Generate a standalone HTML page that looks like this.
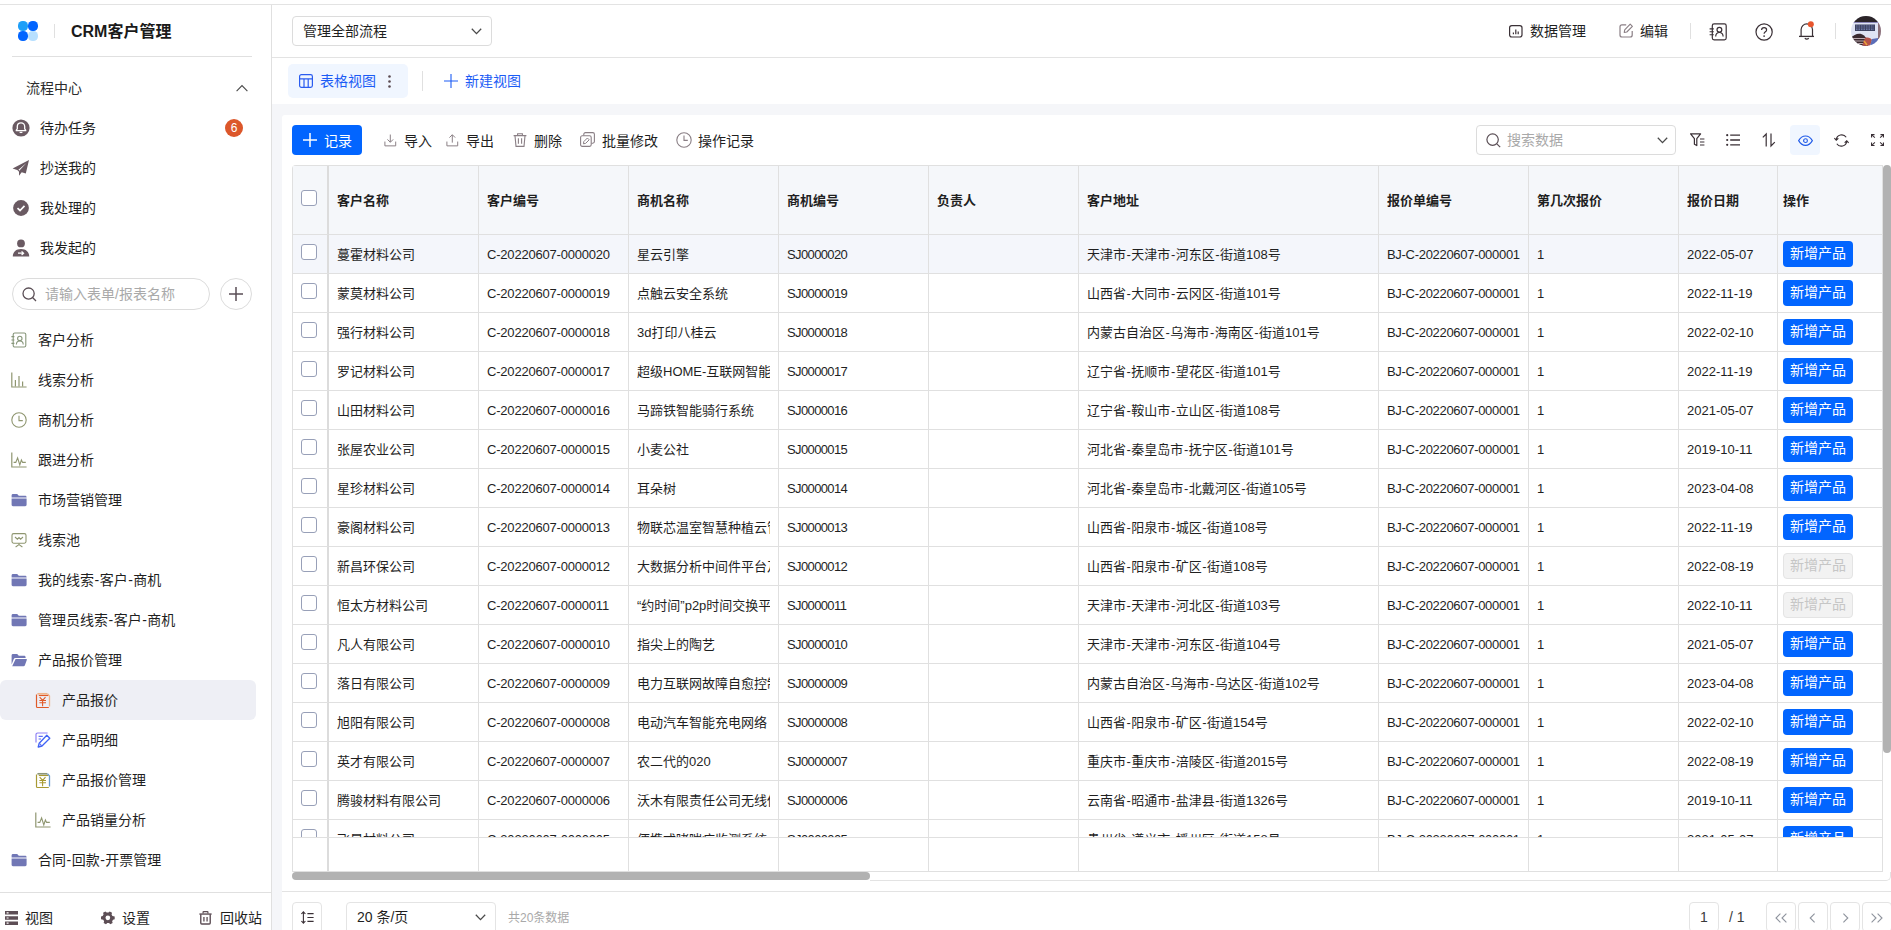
<!DOCTYPE html>
<html lang="zh-CN">
<head>
<meta charset="utf-8">
<title>CRM客户管理</title>
<style>
*{box-sizing:border-box;margin:0;padding:0}
html,body{width:1891px;height:930px;overflow:hidden;background:#fff}
body{position:relative;font-family:"Liberation Sans","Noto Sans CJK SC",sans-serif;font-size:14px;color:#1f1f1f;-webkit-font-smoothing:antialiased}
.abs{position:absolute}
svg{display:block;overflow:visible}
.topline{left:0;top:4px;width:1891px;height:1px;background:#e3e3e3}
/* sidebar */
#side{left:0;top:5px;width:272px;height:925px;border-right:1px solid #e0e0e0;background:#fff}
.t{position:absolute;white-space:nowrap;line-height:20px;height:20px}
.mi{position:absolute;left:0;width:271px;height:40px}
.mi .ic{position:absolute;left:11px;top:12px;width:16px;height:16px}
.hy{margin:0 0.5px}
.mi .tx{position:absolute;left:38px;top:10px;line-height:20px;white-space:nowrap;color:#1f1f1f}
.mi.sub .ic{left:35px}
.mi.sub .tx{left:62px}
.mi.fl .tx{left:40px}
.mi.fl .ic{left:12px;top:11px;width:18px;height:18px}
/* main */
#hdr{left:272px;top:5px;width:1619px;height:53px;border-bottom:1px solid #e3e3e3;background:#fff}
.sel{border:1px solid #dcdcdc;border-radius:4px;background:#fff}
#grey{left:272px;top:104px;width:1619px;height:826px;background:#f5f6f9}
#card{left:282px;top:115px;width:1609px;height:815px;background:#fff;border-radius:3px 0 0 0}
.tb{position:absolute;top:131px;line-height:20px;white-space:nowrap;color:#1f1f1f}
/* table */
#tw{left:292px;top:165px;width:1591px;height:673px;overflow:hidden;border-radius:4px 0 0 0}
table{border-collapse:separate;border-spacing:0;table-layout:fixed;width:1591px;border-left:1px solid #e0e0e0;border-top:1px solid #e0e0e0;font-size:13px}
th,td{border-right:1px solid #e0e0e0;border-bottom:1px solid #e0e0e0;height:39px;padding:0 8px;text-align:left;vertical-align:middle;overflow:hidden;white-space:nowrap;font-weight:normal}
th{height:69px;background:#f5f7fa;font-weight:bold;color:#1f1f1f}
td div,th div{overflow:hidden;white-space:nowrap;line-height:20px;height:20px;position:relative;top:1px}
.l1{letter-spacing:-0.2px}.l2{letter-spacing:-0.62px}.l3{letter-spacing:-0.3px}
tr.hv td{background:#f4f6fb}
.ck{border-right:2px solid #dcdcdc;padding:0;position:relative}
.cb{position:absolute;left:8px;top:9px;width:16px;height:16px;border:1px solid #98a0b8;border-radius:3px;background:#fff}
th .cb{top:24px}
.op{padding:0 0 0 5px}
.ab{display:block;width:70px;height:26px;line-height:25px;border-radius:4px;background:#0265ff;color:#fff;font-size:14px;text-align:center;position:relative;top:0}
.ab.dis{background:#f2f2f2;color:#c6c6c6;border:1px solid #e4e4e4;line-height:23px}
.pg{position:absolute;top:902px;width:30px;height:30px;border:1px solid #e4e4e4;border-radius:4px;background:#fff}
</style>
</head>
<body>
<div class="abs topline"></div>

<!-- ============ SIDEBAR ============ -->
<div class="abs" id="side"></div>
<!-- logo -->
<svg class="abs" style="left:18px;top:21px" width="20" height="20" viewBox="0 0 20 20">
<rect x="0" y="0" width="10" height="10" rx="4.6" fill="#1e9ff8"/>
<rect x="10" y="0" width="10" height="10" rx="4.6" fill="#0265ff"/>
<rect x="0" y="10" width="10" height="10" rx="4.6" fill="#0265ff"/>
<rect x="10" y="10" width="10" height="10" rx="4.6" fill="#b8e0ff"/>
</svg>
<div class="abs" style="left:54px;top:24px;width:1px;height:14px;background:#e0e0e0"></div>
<div class="t" style="left:71px;top:21px;font-size:16px;font-weight:bold;line-height:22px;height:22px;color:#1a1a1a">CRM客户管理</div>
<div class="abs" style="left:12px;top:56px;width:240px;height:1px;background:#e0e0e0"></div>

<div class="t" style="left:26px;top:78px;color:#2b2b2b">流程中心</div>
<svg class="abs" style="left:235.500px;top:84px" width="12" height="8" viewBox="0 0 12 8"><path d="M0.600 7.200 L6 1.600 L11.400 7.200" fill="none" stroke="#4a4a4a" stroke-width="1.100"/></svg>

<!-- flow items -->
<div class="mi fl" style="top:108px">
<svg class="ic" viewBox="0 0 18 18"><circle cx="9" cy="9" r="8.6" fill="#6a5a62"/><path d="M9 3.8c-2.3 0-3.7 1.7-3.7 3.8v2.2l-1 1.3v.6h9.4v-.6l-1-1.3V7.6c0-2.1-1.4-3.8-3.7-3.8z" fill="none" stroke="#fff" stroke-width="1.3"/><path d="M7.6 13.4h2.8" stroke="#fff" stroke-width="1.3"/></svg>
<span class="tx">待办任务</span>
<span class="abs" style="left:225px;top:11px;width:18px;height:18px;border-radius:9px;background:#dc572a;color:#fff;font-size:12px;line-height:19px;text-align:center">6</span>
</div>
<div class="mi fl" style="top:148px">
<svg class="ic" viewBox="0 0 18 18"><path d="M17 1 L0.600 9.600 L5.900 11.300 L14.400 4 L7 12 L7 16.800 L9.700 13.200 L13.800 14.600 Z" fill="#6a5a62"/><path d="M6 11.300L7 12" stroke="#6a5a62" stroke-width="1.200"/></svg>
<span class="tx">抄送我的</span>
</div>
<div class="mi fl" style="top:188px">
<svg class="ic" viewBox="0 0 18 18"><circle cx="9" cy="9" r="7.900" fill="#6a5a62"/><path d="M5.500 9.200 L8 11.500 L12.500 6.800" fill="none" stroke="#fff" stroke-width="1.7"/></svg>
<span class="tx">我处理的</span>
</div>
<div class="mi fl" style="top:228px">
<svg class="ic" viewBox="0 0 18 18"><circle cx="9" cy="4.4" r="3.9" fill="#6a5a62"/><path d="M0.8 17.4c0-4.4 3.2-7.4 8.2-7.4s8.2 3 8.2 7.4z" fill="#6a5a62"/><path d="M6 14.2h5.2M9.6 12.4l2 1.8-2 1.8" fill="none" stroke="#fff" stroke-width="1.2"/></svg>
<span class="tx">我发起的</span>
</div>

<!-- search -->
<div class="abs" style="left:12px;top:278px;width:198px;height:32px;border:1px solid #dcdcdc;border-radius:16px"></div>
<svg class="abs" style="left:22px;top:287px" width="15" height="15" viewBox="0 0 15 15"><circle cx="6.6" cy="6.6" r="5.6" fill="none" stroke="#5a4e55" stroke-width="1.3"/><path d="M10.8 10.8 L14 14" stroke="#5a4e55" stroke-width="1.3"/></svg>
<div class="t" style="left:45px;top:284px;color:#a9a9a9">请输入表单/报表名称</div>
<div class="abs" style="left:220px;top:278px;width:32px;height:32px;border:1px solid #dcdcdc;border-radius:16px"></div>
<svg class="abs" style="left:229px;top:287px" width="14" height="14" viewBox="0 0 14 14"><path d="M7 0v14M0 7h14" stroke="#5a4e55" stroke-width="1.5"/></svg>

<!-- menu -->
<div class="mi" style="top:320px">
<svg class="ic" viewBox="0 0 16 16"><rect x="2.2" y="1" width="12.6" height="14" rx="1.6" fill="none" stroke="#87967a" stroke-width="1.1"/><path d="M0.4 4.6h3M0.4 8h3M0.4 11.4h3" stroke="#87967a" stroke-width="1.1"/><circle cx="8.8" cy="6.4" r="2.2" fill="none" stroke="#87967a" stroke-width="1.1"/><path d="M5.4 12.6c0-2.2 1.4-3.6 3.4-3.6s3.4 1.4 3.4 3.6" fill="none" stroke="#87967a" stroke-width="1.1"/></svg>
<span class="tx">客户分析</span></div>
<div class="mi" style="top:360px">
<svg class="ic" viewBox="0 0 16 16"><path d="M0.8 0.6V15H15.6" fill="none" stroke="#8f9670" stroke-width="1.2"/><path d="M4.4 14.4V8M8 14.4V4M11.6 14.4V9.6" stroke="#8f9670" stroke-width="1.2"/></svg>
<span class="tx">线索分析</span></div>
<div class="mi" style="top:400px">
<svg class="ic" viewBox="0 0 16 16"><circle cx="8" cy="8" r="7.2" fill="none" stroke="#8f9670" stroke-width="1.1"/><path d="M8 3.8V8.6H11.8" fill="none" stroke="#8f9670" stroke-width="1.1"/></svg>
<span class="tx">商机分析</span></div>
<div class="mi" style="top:440px">
<svg class="ic" viewBox="0 0 16 16"><path d="M0.8 0.6V15H15.6" fill="none" stroke="#8f9670" stroke-width="1.2"/><path d="M2.6 10.4H4.800L6.600 5.800L8.800 13L10.400 8L11.600 10.400H14.800" fill="none" stroke="#8f9670" stroke-width="1.1"/></svg>
<span class="tx">跟进分析</span></div>
<div class="mi" style="top:480px">
<svg class="ic" viewBox="0 0 16 16"><path d="M0.6 3.4c0-.8.6-1.4 1.4-1.4h4.2l1.6 1.8h6.4c.8 0 1.4.6 1.4 1.4V5.6H0.6z M0.6 6.6H15.6V12.8c0 .8-.6 1.4-1.4 1.4H2c-.8 0-1.4-.6-1.4-1.4z" fill="#7177b5"/></svg>
<span class="tx">市场营销管理</span></div>
<div class="mi" style="top:520px">
<svg class="ic" viewBox="0 0 16 16"><rect x="1" y="1.6" width="14" height="9.6" rx="1.6" fill="none" stroke="#8f9670" stroke-width="1.1"/><path d="M4 5L6.4 7.2L8 5.6L9.6 7.2L12 5" fill="none" stroke="#8f9670" stroke-width="1.1"/><path d="M8 11.2V12.6M4.6 15L8 12.6L11.4 15" fill="none" stroke="#8f9670" stroke-width="1.1"/></svg>
<span class="tx">线索池</span></div>
<div class="mi" style="top:560px">
<svg class="ic" viewBox="0 0 16 16"><path d="M0.6 3.4c0-.8.6-1.4 1.4-1.4h4.2l1.6 1.8h6.4c.8 0 1.4.6 1.4 1.4V5.6H0.6z M0.6 6.6H15.6V12.8c0 .8-.6 1.4-1.4 1.4H2c-.8 0-1.4-.6-1.4-1.4z" fill="#7177b5"/></svg>
<span class="tx">我的线索<span class="hy">-</span>客户<span class="hy">-</span>商机</span></div>
<div class="mi" style="top:600px">
<svg class="ic" viewBox="0 0 16 16"><path d="M0.6 3.4c0-.8.6-1.4 1.4-1.4h4.2l1.6 1.8h6.4c.8 0 1.4.6 1.4 1.4V5.6H0.6z M0.6 6.6H15.6V12.8c0 .8-.6 1.4-1.4 1.4H2c-.8 0-1.4-.6-1.4-1.4z" fill="#7177b5"/></svg>
<span class="tx">管理员线索<span class="hy">-</span>客户<span class="hy">-</span>商机</span></div>
<div class="mi" style="top:640px">
<svg class="ic" viewBox="0 0 16 16"><path d="M0.6 3.4c0-.8.6-1.4 1.4-1.4h4.2l1.6 1.8h5.4c.8 0 1.4.6 1.4 1.4V6H4.4c-.8 0-1.4.4-1.7 1.2L0.6 12.6z" fill="#7177b5"/><path d="M4.6 7h10.6c.5 0 .8.4.6.9l-1.9 5.3c-.2.6-.7 1-1.4 1H1.2z" fill="#7177b5"/></svg>
<span class="tx">产品报价管理</span></div>
<div class="abs" style="left:0;top:680px;width:256px;height:40px;background:#eeeff5;border-radius:6px"></div>
<div class="mi sub" style="top:680px">
<svg class="ic" viewBox="0 0 16 16"><path d="M2.400 1.800h9.800" fill="none" stroke="#f0b48a" stroke-width="1.700"/><path d="M12.400 1.600l2.100 2.400v10.600" fill="none" stroke="#f0b48a" stroke-width="1.300"/><path d="M1.500 2.600v11.800c0 .600.500 1.100 1.100 1.100h11.200" fill="none" stroke="#e05a28" stroke-width="1.200"/><path d="M3.800 3.500h9.400" fill="none" stroke="#e05a28" stroke-width="1.100"/><path d="M4.700 5.200l2.900 3.200 2.900-3.200M7.600 8.200v6M4.400 8.500h6.600M4.400 10.700h6.600" fill="none" stroke="#e05a28" stroke-width="1.100"/></svg>
<span class="tx">产品报价</span></div>
<div class="mi sub" style="top:720px">
<svg class="ic" viewBox="0 0 16 16"><path d="M1 10.5V2.6c0-.9.7-1.6 1.6-1.6h10" fill="none" stroke="#8f82f5" stroke-width="1.200"/><path d="M3.6 4.4h4.2M3.6 7h2.4" stroke="#5b6ef5" stroke-width="1.1"/><path d="M11.8 3.2L14.8 6.2L7 14L3.2 15L4.2 11.2Z" fill="none" stroke="#3f63f5" stroke-width="1.300" stroke-linejoin="round"/><path d="M4.4 11.4L6.8 13.8" stroke="#5b6ef5" stroke-width="1.1"/></svg>
<span class="tx">产品明细</span></div>
<div class="mi sub" style="top:760px">
<svg class="ic" viewBox="0 0 16 16"><path d="M2.400 1.800h9.800" fill="none" stroke="#8c967a" stroke-width="1.700"/><path d="M12.400 1.600l2.100 2.400v10.600" fill="none" stroke="#6a9acc" stroke-width="1.300"/><path d="M1.500 2.600v11.800c0 .600.500 1.100 1.100 1.100h11.200" fill="none" stroke="#a89a34" stroke-width="1.200"/><path d="M3.800 3.500h9.400" fill="none" stroke="#a89a34" stroke-width="1.100"/><path d="M4.700 5.200l2.900 3.200 2.900-3.200M7.600 8.200v6M4.400 8.500h6.600M4.400 10.700h6.600" fill="none" stroke="#a89a34" stroke-width="1.100"/></svg>
<span class="tx">产品报价管理</span></div>
<div class="mi sub" style="top:800px">
<svg class="ic" viewBox="0 0 16 16"><path d="M0.8 0.6V15H15.6" fill="none" stroke="#8f9670" stroke-width="1.2"/><path d="M2.6 10.4H4.800L6.600 5.800L8.800 13L10.400 8L11.600 10.400H14.800" fill="none" stroke="#8f9670" stroke-width="1.1"/></svg>
<span class="tx">产品销量分析</span></div>
<div class="mi" style="top:840px">
<svg class="ic" viewBox="0 0 16 16"><path d="M0.6 3.4c0-.8.6-1.4 1.4-1.4h4.2l1.6 1.8h6.4c.8 0 1.4.6 1.4 1.4V5.6H0.6z M0.6 6.6H15.6V12.8c0 .8-.6 1.4-1.4 1.4H2c-.8 0-1.4-.6-1.4-1.4z" fill="#7177b5"/></svg>
<span class="tx">合同<span class="hy">-</span>回款<span class="hy">-</span>开票管理</span></div>

<!-- bottom bar -->
<div class="abs" style="left:0;top:892px;width:271px;height:1px;background:#e0e0e0"></div>
<svg class="abs" style="left:5px;top:911px" width="13" height="14" viewBox="0 0 13 14"><path d="M0 0h13v3.6H0zM0 5.2h13v3.6H0zM0 10.4h13V14H0z" fill="#5d4e55"/><path d="M1.6 1.2h2v1.2h-2zM1.6 6.4h2v1.2h-2zM1.6 11.6h2v1.2h-2z" fill="#fff"/></svg>
<div class="t" style="left:25px;top:908px">视图</div>
<svg class="abs" style="left:101.200px;top:911.300px" width="13.700" height="13.700" viewBox="0 0 14 14"><path transform="rotate(90 7 7)" d="M5.6 0h2.8l.5 1.7 1.6.9 1.7-.5 1.4 2.4-1.2 1.3v1.8l1.2 1.3-1.4 2.4-1.7-.5-1.6.9L8.400 14H5.600l-.5-1.700-1.600-.9-1.700.5L.4 9.500l1.200-1.300V6.400L.4 5.100l1.400-2.400 1.700.5 1.600-.9z" fill="#5d4e55"/><circle cx="7" cy="7" r="2.400" fill="#fff"/></svg>
<div class="t" style="left:122px;top:908px">设置</div>
<svg class="abs" style="left:198.500px;top:911.300px" width="13" height="13.900" viewBox="0 0 14 15"><path d="M4.400 2.600V1.200c0-.3.300-.6.600-.6h4c.3 0 .6.300.6.600v1.400" fill="none" stroke="#5d4e55" stroke-width="1.300"/><path d="M0.400 3.300h13.200" stroke="#5d4e55" stroke-width="1.500"/><path d="M1.900 3.600V13c0 .6.400 1 1 1h8.200c.6 0 1-.4 1-1V3.600" fill="none" stroke="#5d4e55" stroke-width="1.500"/><path d="M5.300 6.400v5M8.700 6.400v5" stroke="#5d4e55" stroke-width="1.400"/></svg>
<div class="t" style="left:220px;top:908px">回收站</div>


<!-- ============ HEADER ============ -->
<div class="abs" id="hdr"></div>
<!-- flow select -->
<div class="abs sel" style="left:292px;top:16px;width:200px;height:30px"></div>
<div class="t" style="left:303px;top:21px;color:#1f1f1f">管理全部流程</div>
<svg class="abs" style="left:471px;top:28px" width="11" height="7" viewBox="0 0 11 7"><path d="M0.800 0.800L5.500 5.600L10.200 0.800" fill="none" stroke="#4a4a4a" stroke-width="1.300"/></svg>

<!-- right header -->
<svg class="abs" style="left:1509px;top:24.500px" width="14" height="14" viewBox="0 0 14 14"><rect x="0.600" y="0.600" width="12.400" height="11.400" rx="2.200" fill="none" stroke="#3a3036" stroke-width="1.200"/><path d="M4.400 7.400v1.800M6.800 4.600v4.600M9.200 6.400v2.800" stroke="#3a3036" stroke-width="1.200"/></svg>
<div class="t" style="left:1530px;top:21px">数据管理</div>
<svg class="abs" style="left:1619px;top:23px" width="15" height="15" viewBox="0 0 15 15"><path d="M7.200 1.800H3c-1.100 0-2 .9-2 2v8.200c0 1.100.9 2 2 2h8.200c1.100 0 2-.9 2-2V8" fill="none" stroke="#8a7f85" stroke-width="1.200"/><path d="M11.200 1.200l2.200 2.200-5.600 5.600-2.600.5.500-2.600z" fill="none" stroke="#8a7f85" stroke-width="1.100" stroke-linejoin="round"/></svg>
<div class="t" style="left:1640px;top:21px">编辑</div>
<div class="abs" style="left:1690px;top:23px;width:1px;height:16px;background:#e0e0e0"></div>
<!-- contacts -->
<svg class="abs" style="left:1709px;top:22.500px" width="18" height="18" viewBox="0 0 18 18"><rect x="3.300" y="0.900" width="13.900" height="16" rx="1.800" fill="none" stroke="#3a3036" stroke-width="1.200"/><path d="M0.600 5.900h4.200M0.600 8.800h4.200M0.600 11.700h4.200" stroke="#3a3036" stroke-width="1.100"/><circle cx="10.400" cy="6.700" r="2.400" fill="none" stroke="#3a3036" stroke-width="1.200"/><path d="M6.700 13.600c0-2.500 1.500-4.100 3.700-4.100s3.700 1.600 3.700 4.100" fill="none" stroke="#3a3036" stroke-width="1.200"/></svg>
<!-- help -->
<svg class="abs" style="left:1755px;top:22.500px" width="18" height="18" viewBox="0 0 18 18"><circle cx="9.100" cy="9" r="8.100" fill="none" stroke="#3a3036" stroke-width="1.200"/><path d="M6.600 7.100c0-1.500 1.100-2.400 2.500-2.400s2.500.900 2.500 2.200c0 1.900-2.500 1.900-2.500 3.900" fill="none" stroke="#3a3036" stroke-width="1.200"/><circle cx="9.100" cy="13.100" r="0.850" fill="#3a3036"/></svg>
<!-- bell -->
<svg class="abs" style="left:1798px;top:22px" width="18" height="19" viewBox="0 0 18 19"><path d="M3.100 14.200V7.600a5.700 5.700 0 0 1 11.400 0V14.200" fill="none" stroke="#3a3036" stroke-width="1.200"/><path d="M1 14.400H16" stroke="#3a3036" stroke-width="1.300"/><path d="M6.800 16.200q2 1.900 4 0" fill="none" stroke="#3a3036" stroke-width="1.200"/><circle cx="12.800" cy="2.300" r="3" fill="#e8552d"/></svg>
<div class="abs" style="left:1835px;top:23px;width:1px;height:16px;background:#e0e0e0"></div>
<!-- avatar -->
<svg class="abs" style="left:1851px;top:16px;border-radius:50%;overflow:hidden" width="30" height="30" viewBox="0 0 30 30"><g><rect width="30" height="30" fill="#dfe3f4"/><rect width="30" height="6" fill="#2b2428"/><rect x="0" y="6" width="30" height="1" fill="#8a86b8"/><rect x="4" y="8.500" width="20" height="6.500" fill="#3d4260"/><path d="M5 10h18M5 12h18M5 13.600h18" stroke="#7f8bc0" stroke-width="0.800" stroke-dasharray="1.500 1"/><rect x="27" y="7" width="3" height="16" fill="#8c6f78"/><path d="M0 22c3-4 9-6 13-2.500l4 4.500v6H0z" fill="#3a2a30"/><path d="M2 22.500h12M2 25h12M3 27.500h10" stroke="#c9b9c0" stroke-width="0.900"/><path d="M14 22c3-1 6 0 7 2l-2 6h-8z" fill="#b4524a"/><path d="M13 25l3 4" stroke="#e9a13a" stroke-width="1.600"/><path d="M21 23l6-1v8h-8z" fill="#5b6db8"/></g></svg>

<!-- view tabs -->
<div class="abs" style="left:288px;top:64px;width:120px;height:34px;background:#f0f6ff;border-radius:5px"></div>
<svg class="abs" style="left:299px;top:74px" width="14" height="14" viewBox="0 0 14 14"><rect x="0.600" y="0.600" width="12.800" height="12.800" rx="1.800" fill="none" stroke="#2a5cf0" stroke-width="1.200"/><path d="M0.600 4.800h12.800M5 4.800v8.600M9.200 4.800v8.600" stroke="#2a5cf0" stroke-width="1.200"/></svg>
<div class="t" style="left:320px;top:71px;color:#1c5cf5">表格视图</div>
<svg class="abs" style="left:388px;top:75px" width="3" height="13" viewBox="0 0 3 13"><circle cx="1.500" cy="1.500" r="1.300" fill="#5a4a50"/><circle cx="1.500" cy="6.500" r="1.300" fill="#5a4a50"/><circle cx="1.500" cy="11.500" r="1.300" fill="#5a4a50"/></svg>
<div class="abs" style="left:422px;top:71px;width:1px;height:20px;background:#e0e0e0"></div>
<svg class="abs" style="left:444px;top:74px" width="14" height="14" viewBox="0 0 14 14"><path d="M7 0v14M0 7h14" stroke="#1c5cf5" stroke-width="1.100"/></svg>
<div class="t" style="left:465px;top:71px;color:#1c5cf5">新建视图</div>


<!-- ============ CONTENT ============ -->
<div class="abs" id="grey"></div>
<div class="abs" id="card"></div>
<!-- record button -->
<div class="abs" style="left:292px;top:125px;width:70px;height:30px;background:#0265ff;border-radius:4px"></div>
<svg class="abs" style="left:303px;top:133px" width="14" height="14" viewBox="0 0 14 14"><path d="M7 0v14M0 7h14" stroke="#fff" stroke-width="1.500"/></svg>
<div class="tb" style="left:324px;color:#fff">记录</div>
<!-- import -->
<svg class="abs" style="left:383.5px;top:133.5px" width="12.6" height="12.6" viewBox="0 0 14 14"><path d="M1 8.400v4.800h12V8.400" fill="none" stroke="#8a7f85" stroke-width="1.100"/><path d="M7 0.600v8.400M3.800 6L7 9.200L10.200 6" fill="none" stroke="#8a7f85" stroke-width="1.100"/></svg>
<div class="tb" style="left:404px">导入</div>
<!-- export -->
<svg class="abs" style="left:445.5px;top:133.5px" width="12.6" height="12.6" viewBox="0 0 14 14"><path d="M1 8.400v4.800h12V8.400" fill="none" stroke="#8a7f85" stroke-width="1.100"/><path d="M7 9.600V1M3.800 4L7 0.800L10.200 4" fill="none" stroke="#8a7f85" stroke-width="1.100"/></svg>
<div class="tb" style="left:466px">导出</div>
<!-- delete -->
<svg class="abs" style="left:513px;top:133px" width="14" height="14" viewBox="0 0 14 14"><path d="M0.600 2.600h12.800M4.600 2.400V0.800h4.800v1.600" fill="none" stroke="#8a7f85" stroke-width="1.100"/><path d="M2 2.800l1 10.600h8l1-10.600" fill="none" stroke="#8a7f85" stroke-width="1.100"/><path d="M5.400 5.200v5.600M8.600 5.200v5.600" stroke="#8a7f85" stroke-width="1.100"/></svg>
<div class="tb" style="left:534px">删除</div>
<!-- batch -->
<svg class="abs" style="left:580px;top:132px" width="15" height="15" viewBox="0 0 15 15"><path d="M3.800 3.600V2.200c0-.9.700-1.600 1.600-1.600h7.400c.9 0 1.600.7 1.600 1.600v7.400c0 .9-.7 1.600-1.600 1.600h-1.400" fill="none" stroke="#8a7f85" stroke-width="1.100"/><rect x="0.600" y="3.800" width="10.600" height="10.600" rx="1.600" fill="none" stroke="#8a7f85" stroke-width="1.100"/><path d="M7.400 6l1.800 1.800-3.600 3.600-2.200.4.400-2.200z" fill="none" stroke="#8a7f85" stroke-width="1" stroke-linejoin="round"/></svg>
<div class="tb" style="left:602px">批量修改</div>
<!-- oplog -->
<svg class="abs" style="left:676px;top:132px" width="16" height="16" viewBox="0 0 16 16"><circle cx="8" cy="8" r="7.200" fill="none" stroke="#8a7f85" stroke-width="1.100"/><path d="M8 3.600v4.800h3.800" fill="none" stroke="#8a7f85" stroke-width="1.100"/></svg>
<div class="tb" style="left:698px">操作记录</div>

<!-- search -->
<div class="abs sel" style="left:1476px;top:125px;width:200px;height:30px"></div>
<svg class="abs" style="left:1486px;top:133px" width="15" height="15" viewBox="0 0 15 15"><circle cx="6.600" cy="6.600" r="5.700" fill="none" stroke="#5a4e55" stroke-width="1.200"/><path d="M10.800 10.800L14.200 14.200" stroke="#5a4e55" stroke-width="1.200"/></svg>
<div class="tb" style="left:1507px;top:130px;color:#a9a9a9">搜索数据</div>
<svg class="abs" style="left:1657px;top:137px" width="11" height="7" viewBox="0 0 11 7"><path d="M0.800 0.800L5.500 5.600L10.200 0.800" fill="none" stroke="#4a4a4a" stroke-width="1.300"/></svg>

<!-- right icons -->
<svg class="abs" style="left:1690px;top:133px" width="15" height="14" viewBox="0 0 15 14"><path d="M0.600 0.800h10l-3.800 4.800v7l-2.400-1.400V5.600z" fill="none" stroke="#3a3036" stroke-width="1.200" stroke-linejoin="round"/><path d="M10 6h4.400M10 9h4.400M10 12h4.400" stroke="#3a3036" stroke-width="1.100"/></svg>
<svg class="abs" style="left:1726px;top:134px" width="14" height="12" viewBox="0 0 14 12"><circle cx="1.200" cy="1.200" r="1.100" fill="#3a3036"/><circle cx="1.200" cy="6" r="1.100" fill="#3a3036"/><circle cx="1.200" cy="10.800" r="1.100" fill="#3a3036"/><path d="M4.200 1.200H14M4.200 6H14M4.200 10.800H14" stroke="#3a3036" stroke-width="1.300"/></svg>
<svg class="abs" style="left:1762px;top:133px" width="14" height="14" viewBox="0 0 14 14"><path d="M0.800 4.400L4.200 1V13.400" fill="none" stroke="#3a3036" stroke-width="1.200"/><path d="M9 0.600V13L12.800 9.200" fill="none" stroke="#3a3036" stroke-width="1.200"/></svg>
<div class="abs" style="left:1790px;top:125px;width:30px;height:30px;background:#f0f6ff;border-radius:4px"></div>
<svg class="abs" style="left:1797.500px;top:134.500px" width="15" height="11.250" viewBox="0 0 16 12"><path d="M0.700 6C2.600 2.600 5 1 8 1s5.400 1.600 7.300 5C13.400 9.400 11 11 8 11S2.600 9.400.700 6z" fill="none" stroke="#1f5ae8" stroke-width="1.200"/><circle cx="8" cy="6" r="2" fill="none" stroke="#1f5ae8" stroke-width="1.200"/></svg>
<svg class="abs" style="left:1833.500px;top:132.500px" width="15" height="15" viewBox="0 0 16 16"><path d="M2.400 7.200A5.800 5.800 0 0 1 13 4.600M13.600 8.800A5.800 5.800 0 0 1 3 11.400" fill="none" stroke="#3a3036" stroke-width="1.200"/><path d="M0.400 5.400l2 2.200 2.200-2M15.600 10.600l-2-2.200-2.200 2" fill="none" stroke="#3a3036" stroke-width="1.200"/></svg>
<svg class="abs" style="left:1870.500px;top:133.700px" width="13" height="12.100" viewBox="0 0 14 13"><path d="M0.600 3.800V0.600h3.200M10.200 0.600h3.200v3.200M13.400 9.200v3.200h-3.200M3.800 12.400H0.600V9.200" fill="none" stroke="#3a3036" stroke-width="1.200"/><path d="M0.800 0.800l3.400 3.200M13.200 0.800L9.800 4M13.200 12.200L9.800 9M0.800 12.200L4.200 9" stroke="#3a3036" stroke-width="1.100"/></svg>


<div class="abs" id="tw">
<table>
<colgroup><col style="width:36px"><col style="width:150px"><col style="width:150px"><col style="width:150px"><col style="width:150px"><col style="width:150px"><col style="width:300px"><col style="width:150px"><col style="width:150px"><col style="width:99px"><col style="width:105px"></colgroup>
<thead><tr><th class="ck"><i class="cb"></i></th><th><div>客户名称</div></th><th><div>客户编号</div></th><th><div>商机名称</div></th><th><div>商机编号</div></th><th><div>负责人</div></th><th><div>客户地址</div></th><th><div>报价单编号</div></th><th><div>第几次报价</div></th><th><div>报价日期</div></th><th class="op" style="padding-left:5px"><div>操作</div></th></tr></thead>
<tbody>
<tr class="hv"><td class="ck"><i class="cb"></i></td><td><div>蔓霍材料公司</div></td><td><div class="l1">C-20220607-0000020</div></td><td><div>星云引擎</div></td><td><div class="l2">SJ0000020</div></td><td></td><td><div>天津市<span class="hy">-</span>天津市<span class="hy">-</span>河东区<span class="hy">-</span>街道108号</div></td><td><div class="l3">BJ-C-20220607-000001</div></td><td><div class="lt">1</div></td><td><div class="lt">2022-05-07</div></td><td class="op"><span class="ab">新增产品</span></td></tr>
<tr><td class="ck"><i class="cb"></i></td><td><div>蒙莫材料公司</div></td><td><div class="l1">C-20220607-0000019</div></td><td><div>点触云安全系统</div></td><td><div class="l2">SJ0000019</div></td><td></td><td><div>山西省<span class="hy">-</span>大同市<span class="hy">-</span>云冈区<span class="hy">-</span>街道101号</div></td><td><div class="l3">BJ-C-20220607-000001</div></td><td><div class="lt">1</div></td><td><div class="lt">2022-11-19</div></td><td class="op"><span class="ab">新增产品</span></td></tr>
<tr><td class="ck"><i class="cb"></i></td><td><div>强行材料公司</div></td><td><div class="l1">C-20220607-0000018</div></td><td><div>3d打印八桂云</div></td><td><div class="l2">SJ0000018</div></td><td></td><td><div>内蒙古自治区<span class="hy">-</span>乌海市<span class="hy">-</span>海南区<span class="hy">-</span>街道101号</div></td><td><div class="l3">BJ-C-20220607-000001</div></td><td><div class="lt">1</div></td><td><div class="lt">2022-02-10</div></td><td class="op"><span class="ab">新增产品</span></td></tr>
<tr><td class="ck"><i class="cb"></i></td><td><div>罗记材料公司</div></td><td><div class="l1">C-20220607-0000017</div></td><td><div>超级HOME-互联网智能家居</div></td><td><div class="l2">SJ0000017</div></td><td></td><td><div>辽宁省<span class="hy">-</span>抚顺市<span class="hy">-</span>望花区<span class="hy">-</span>街道101号</div></td><td><div class="l3">BJ-C-20220607-000001</div></td><td><div class="lt">1</div></td><td><div class="lt">2022-11-19</div></td><td class="op"><span class="ab">新增产品</span></td></tr>
<tr><td class="ck"><i class="cb"></i></td><td><div>山田材料公司</div></td><td><div class="l1">C-20220607-0000016</div></td><td><div>马蹄铁智能骑行系统</div></td><td><div class="l2">SJ0000016</div></td><td></td><td><div>辽宁省<span class="hy">-</span>鞍山市<span class="hy">-</span>立山区<span class="hy">-</span>街道108号</div></td><td><div class="l3">BJ-C-20220607-000001</div></td><td><div class="lt">1</div></td><td><div class="lt">2021-05-07</div></td><td class="op"><span class="ab">新增产品</span></td></tr>
<tr><td class="ck"><i class="cb"></i></td><td><div>张屋农业公司</div></td><td><div class="l1">C-20220607-0000015</div></td><td><div>小麦公社</div></td><td><div class="l2">SJ0000015</div></td><td></td><td><div>河北省<span class="hy">-</span>秦皇岛市<span class="hy">-</span>抚宁区<span class="hy">-</span>街道101号</div></td><td><div class="l3">BJ-C-20220607-000001</div></td><td><div class="lt">1</div></td><td><div class="lt">2019-10-11</div></td><td class="op"><span class="ab">新增产品</span></td></tr>
<tr><td class="ck"><i class="cb"></i></td><td><div>星珍材料公司</div></td><td><div class="l1">C-20220607-0000014</div></td><td><div>耳朵树</div></td><td><div class="l2">SJ0000014</div></td><td></td><td><div>河北省<span class="hy">-</span>秦皇岛市<span class="hy">-</span>北戴河区<span class="hy">-</span>街道105号</div></td><td><div class="l3">BJ-C-20220607-000001</div></td><td><div class="lt">1</div></td><td><div class="lt">2023-04-08</div></td><td class="op"><span class="ab">新增产品</span></td></tr>
<tr><td class="ck"><i class="cb"></i></td><td><div>豪阁材料公司</div></td><td><div class="l1">C-20220607-0000013</div></td><td><div>物联芯温室智慧种植云管理</div></td><td><div class="l2">SJ0000013</div></td><td></td><td><div>山西省<span class="hy">-</span>阳泉市<span class="hy">-</span>城区<span class="hy">-</span>街道108号</div></td><td><div class="l3">BJ-C-20220607-000001</div></td><td><div class="lt">1</div></td><td><div class="lt">2022-11-19</div></td><td class="op"><span class="ab">新增产品</span></td></tr>
<tr><td class="ck"><i class="cb"></i></td><td><div>新昌环保公司</div></td><td><div class="l1">C-20220607-0000012</div></td><td><div>大数据分析中间件平台及应用</div></td><td><div class="l2">SJ0000012</div></td><td></td><td><div>山西省<span class="hy">-</span>阳泉市<span class="hy">-</span>矿区<span class="hy">-</span>街道108号</div></td><td><div class="l3">BJ-C-20220607-000001</div></td><td><div class="lt">1</div></td><td><div class="lt">2022-08-19</div></td><td class="op"><span class="ab dis">新增产品</span></td></tr>
<tr><td class="ck"><i class="cb"></i></td><td><div>恒太方材料公司</div></td><td><div class="l1">C-20220607-0000011</div></td><td><div>“约时间”p2p时间交换平台</div></td><td><div class="l2">SJ0000011</div></td><td></td><td><div>天津市<span class="hy">-</span>天津市<span class="hy">-</span>河北区<span class="hy">-</span>街道103号</div></td><td><div class="l3">BJ-C-20220607-000001</div></td><td><div class="lt">1</div></td><td><div class="lt">2022-10-11</div></td><td class="op"><span class="ab dis">新增产品</span></td></tr>
<tr><td class="ck"><i class="cb"></i></td><td><div>凡人有限公司</div></td><td><div class="l1">C-20220607-0000010</div></td><td><div>指尖上的陶艺</div></td><td><div class="l2">SJ0000010</div></td><td></td><td><div>天津市<span class="hy">-</span>天津市<span class="hy">-</span>河东区<span class="hy">-</span>街道104号</div></td><td><div class="l3">BJ-C-20220607-000001</div></td><td><div class="lt">1</div></td><td><div class="lt">2021-05-07</div></td><td class="op"><span class="ab">新增产品</span></td></tr>
<tr><td class="ck"><i class="cb"></i></td><td><div>落日有限公司</div></td><td><div class="l1">C-20220607-0000009</div></td><td><div>电力互联网故障自愈控制系统</div></td><td><div class="l2">SJ0000009</div></td><td></td><td><div>内蒙古自治区<span class="hy">-</span>乌海市<span class="hy">-</span>乌达区<span class="hy">-</span>街道102号</div></td><td><div class="l3">BJ-C-20220607-000001</div></td><td><div class="lt">1</div></td><td><div class="lt">2023-04-08</div></td><td class="op"><span class="ab">新增产品</span></td></tr>
<tr><td class="ck"><i class="cb"></i></td><td><div>旭阳有限公司</div></td><td><div class="l1">C-20220607-0000008</div></td><td><div>电动汽车智能充电网络</div></td><td><div class="l2">SJ0000008</div></td><td></td><td><div>山西省<span class="hy">-</span>阳泉市<span class="hy">-</span>矿区<span class="hy">-</span>街道154号</div></td><td><div class="l3">BJ-C-20220607-000001</div></td><td><div class="lt">1</div></td><td><div class="lt">2022-02-10</div></td><td class="op"><span class="ab">新增产品</span></td></tr>
<tr><td class="ck"><i class="cb"></i></td><td><div>英才有限公司</div></td><td><div class="l1">C-20220607-0000007</div></td><td><div>农二代的020</div></td><td><div class="l2">SJ0000007</div></td><td></td><td><div>重庆市<span class="hy">-</span>重庆市<span class="hy">-</span>涪陵区<span class="hy">-</span>街道2015号</div></td><td><div class="l3">BJ-C-20220607-000001</div></td><td><div class="lt">1</div></td><td><div class="lt">2022-08-19</div></td><td class="op"><span class="ab">新增产品</span></td></tr>
<tr><td class="ck"><i class="cb"></i></td><td><div>腾骏材料有限公司</div></td><td><div class="l1">C-20220607-0000006</div></td><td><div>沃木有限责任公司无线供电</div></td><td><div class="l2">SJ0000006</div></td><td></td><td><div>云南省<span class="hy">-</span>昭通市<span class="hy">-</span>盐津县<span class="hy">-</span>街道1326号</div></td><td><div class="l3">BJ-C-20220607-000001</div></td><td><div class="lt">1</div></td><td><div class="lt">2019-10-11</div></td><td class="op"><span class="ab">新增产品</span></td></tr>
<tr><td class="ck"><i class="cb"></i></td><td><div>飞晨材料公司</div></td><td><div class="l1">C-20220607-0000005</div></td><td><div>便携式哮喘病监测系统</div></td><td><div class="l2">SJ0000005</div></td><td></td><td><div>贵州省<span class="hy">-</span>遵义市<span class="hy">-</span>播州区<span class="hy">-</span>街道158号</div></td><td><div class="l3">BJ-C-20220607-000001</div></td><td><div class="lt">1</div></td><td><div class="lt">2021-05-07</div></td><td class="op"><span class="ab">新增产品</span></td></tr>
</tbody>
</table>
</div>
<!-- table footer row -->
<div class="abs" style="left:292px;top:837px;width:1591px;height:35px;border:1px solid #e0e0e0;background:#fff"></div>
<div class="abs" style="left:327px;top:838px;width:2px;height:33px;background:#dcdcdc"></div>
<div class="abs" style="left:478px;top:838px;width:1px;height:33px;background:#e0e0e0"></div>
<div class="abs" style="left:628px;top:838px;width:1px;height:33px;background:#e0e0e0"></div>
<div class="abs" style="left:778px;top:838px;width:1px;height:33px;background:#e0e0e0"></div>
<div class="abs" style="left:928px;top:838px;width:1px;height:33px;background:#e0e0e0"></div>
<div class="abs" style="left:1078px;top:838px;width:1px;height:33px;background:#e0e0e0"></div>
<div class="abs" style="left:1378px;top:838px;width:1px;height:33px;background:#e0e0e0"></div>
<div class="abs" style="left:1528px;top:838px;width:1px;height:33px;background:#e0e0e0"></div>
<div class="abs" style="left:1678px;top:838px;width:1px;height:33px;background:#e0e0e0"></div>
<div class="abs" style="left:1777px;top:838px;width:1px;height:33px;background:#e0e0e0"></div>
<!-- scrollbars -->
<div class="abs" style="left:292px;top:872px;width:578px;height:8px;border-radius:4px;background:#b2b2b2"></div>
<div class="abs" style="left:870px;top:872px;width:1021px;height:9px;border-bottom:1px solid #e3e3e3;border-right:1px solid #e3e3e3;border-radius:0 0 5px 0"></div>
<div class="abs" style="left:1883px;top:165px;width:8px;height:588px;border-radius:4px 4px 4px 4px;background:#b2b2b2"></div>
<!-- footer -->
<div class="abs" style="left:282px;top:891px;width:1609px;height:1px;background:#e3e3e3"></div>
<div class="abs sel" style="left:292px;top:902px;width:30px;height:32px;border-color:#e4e4e4"></div>
<svg class="abs" style="left:301px;top:911px" width="13" height="13" viewBox="0 0 13 13"><path d="M2.400 0.800v11.400M0.400 3L2.400 0.800L4.400 3M0.400 10L2.400 12.200L4.400 10" fill="none" stroke="#3a3036" stroke-width="1.100"/><path d="M6.400 2.600h6.200M6.400 6.500h6.200M6.400 10.400h6.200" stroke="#3a3036" stroke-width="1.200"/></svg>
<div class="abs sel" style="left:346px;top:902px;width:150px;height:32px;border-color:#e4e4e4"></div>
<div class="t" style="left:357px;top:907px">20 条/页</div>
<svg class="abs" style="left:475px;top:914px" width="11" height="7" viewBox="0 0 11 7"><path d="M0.800 0.800L5.500 5.600L10.200 0.800" fill="none" stroke="#4a4a4a" stroke-width="1.300"/></svg>
<div class="t" style="left:508px;top:908px;font-size:12px;color:#a9a9a9">共20条数据</div>

<div class="pg" style="left:1689px"></div>
<div class="t" style="left:1700px;top:907px;color:#3a3a3a">1</div>
<div class="t" style="left:1729px;top:907px;color:#3a3a3a">/ 1</div>
<div class="pg" style="left:1766px"></div>
<svg class="abs" style="left:1775px;top:913px" width="12" height="10" viewBox="0 0 12 10"><path d="M5.400 0.600L1 5L5.400 9.400M11.400 0.600L7 5L11.400 9.400" fill="none" stroke="#8f949e" stroke-width="1.100"/></svg>
<div class="pg" style="left:1798px"></div>
<svg class="abs" style="left:1809px;top:913px" width="7" height="10" viewBox="0 0 7 10"><path d="M5.600 0.600L1.200 5L5.600 9.400" fill="none" stroke="#8f949e" stroke-width="1.100"/></svg>
<div class="pg" style="left:1830px"></div>
<svg class="abs" style="left:1842px;top:913px" width="7" height="10" viewBox="0 0 7 10"><path d="M1.400 0.600L5.800 5L1.400 9.400" fill="none" stroke="#8f949e" stroke-width="1.100"/></svg>
<div class="pg" style="left:1862px"></div>
<svg class="abs" style="left:1871px;top:913px" width="12" height="10" viewBox="0 0 12 10"><path d="M0.600 0.600L5 5L0.600 9.400M6.600 0.600L11 5L6.600 9.400" fill="none" stroke="#8f949e" stroke-width="1.100"/></svg>

</body>
</html>
